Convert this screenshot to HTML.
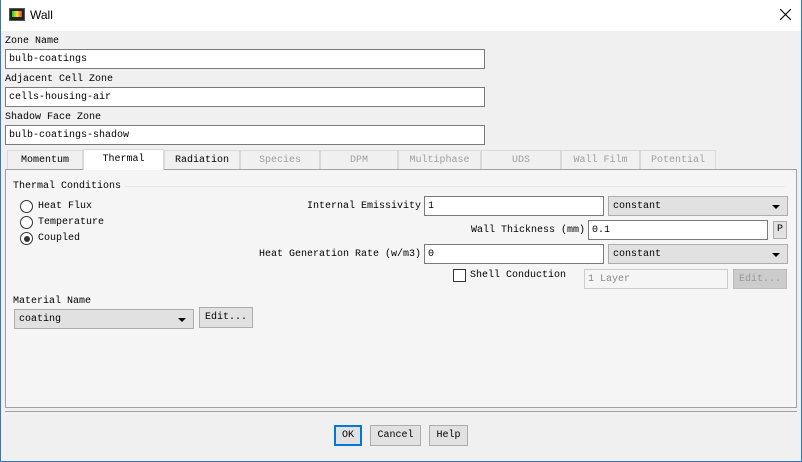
<!DOCTYPE html>
<html><head><style>
*{box-sizing:border-box;margin:0;padding:0}
body{width:802px;height:462px;background:#f0f0f0;position:relative;overflow:hidden;font-family:"Liberation Mono","Noto Sans CJK SC",monospace;font-size:10px;color:#000}
.a{position:absolute;white-space:nowrap}
.in{position:absolute;background:#fff;border:1px solid #7a7a7a;padding:0 0 0 3px;line-height:19px;font-size:10px}
.dd{position:absolute;background:#e1e1e1;border:1px solid #adadad;padding-left:4px;line-height:19px}
.dd:after{content:"";position:absolute;right:7px;top:8px;border-left:4px solid transparent;border-right:4px solid transparent;border-top:4px solid #000}
.btn{position:absolute;background:#e1e1e1;border:1px solid #adadad;text-align:center;line-height:19px}
.tab{position:absolute;top:150px;height:19px;border:1px solid #d9d9d9;border-bottom:none;background:#f0f0f0;text-align:center;line-height:19px;color:#a0a0a0}
</style></head><body>
<div class="a" style="left:0;top:0;width:802px;height:31px;background:#fff"></div>
<div class="a" style="left:0;top:0;width:1px;height:462px;background:#2b79d0"></div>
<div class="a" style="left:801px;top:0;width:1px;height:462px;background:#2b79d0"></div>
<div class="a" style="left:0;top:461px;width:802px;height:1px;background:#2b79d0"></div>
<div class="a" style="left:9px;top:8px;width:16px;height:13px;background:#222;border:1px solid #555"><div style="position:absolute;left:2px;top:2px;width:10px;height:6px;background:linear-gradient(90deg,#1c4,#ee2,#e33)"></div></div>
<div class="a" style="left:30px;top:8px;font-family:'Liberation Sans',sans-serif;font-size:12px">Wall</div>
<svg class="a" style="left:780px;top:9px" width="11" height="11"><path d="M0 0L11 11M11 0L0 11" stroke="#000" stroke-width="1.1"/></svg>

<div class="a" style="left:5px;top:36px">Zone Name</div>
<div class="in" style="left:5px;top:49px;width:480px;height:20px">bulb-coatings</div>
<div class="a" style="left:5px;top:74px">Adjacent Cell Zone</div>
<div class="in" style="left:5px;top:87px;width:480px;height:20px">cells-housing-air</div>
<div class="a" style="left:5px;top:112px">Shadow Face Zone</div>
<div class="in" style="left:5px;top:125px;width:480px;height:20px">bulb-coatings-shadow</div>

<div class="tab" style="left:7px;width:76px;color:#000">Momentum</div>
<div class="tab" style="left:83px;width:81px;top:149px;height:21px;background:#fff;color:#000;z-index:2">Thermal</div>
<div class="tab" style="left:164px;width:76px;color:#000">Radiation</div>
<div class="tab" style="left:240px;width:80px">Species</div>
<div class="tab" style="left:320px;width:78px">DPM</div>
<div class="tab" style="left:398px;width:83px">Multiphase</div>
<div class="tab" style="left:481px;width:80px">UDS</div>
<div class="tab" style="left:561px;width:79px">Wall Film</div>
<div class="tab" style="left:640px;width:76px">Potential</div>

<div class="a" style="left:5px;top:169px;width:792px;height:239px;background:#f5f5f5;border:1px solid #a0a0a0"></div>
<div class="a" style="left:13px;top:181px">Thermal Conditions</div>
<div class="a" style="left:125px;top:186px;width:660px;height:1px;background:#e6e6e6"></div>

<div class="a" style="left:20px;top:200px;width:13px;height:13px;border:1px solid #333;border-radius:50%;background:#fff"></div>
<div class="a" style="left:38px;top:201px">Heat Flux</div>
<div class="a" style="left:20px;top:216px;width:13px;height:13px;border:1px solid #333;border-radius:50%;background:#fff"></div>
<div class="a" style="left:38px;top:217px">Temperature</div>
<div class="a" style="left:20px;top:232px;width:13px;height:13px;border:1px solid #333;border-radius:50%;background:#fff"><div style="position:absolute;left:2.5px;top:2.5px;width:6px;height:6px;border-radius:50%;background:#333"></div></div>
<div class="a" style="left:38px;top:233px">Coupled</div>

<div class="a" style="right:381px;top:201px">Internal Emissivity</div>
<div class="in" style="left:424px;top:196px;width:180px;height:20px">1</div>
<div class="dd" style="left:608px;top:196px;width:180px;height:20px">constant</div>
<div class="a" style="right:217px;top:225px">Wall Thickness (mm)</div>
<div class="in" style="left:588px;top:220px;width:180px;height:20px">0.1</div>
<div class="btn" style="left:773px;top:221px;width:14px;height:18px;line-height:16px">P</div>
<div class="a" style="right:381px;top:249px">Heat Generation Rate (w/m3)</div>
<div class="in" style="left:424px;top:244px;width:180px;height:20px">0</div>
<div class="dd" style="left:608px;top:244px;width:180px;height:20px">constant</div>
<div class="a" style="left:453px;top:269px;width:13px;height:13px;border:1px solid #333;background:#fff"></div>
<div class="a" style="left:470px;top:270px">Shell Conduction</div>
<div class="in" style="left:584px;top:269px;width:144px;height:20px;background:#f5f5f5;border-color:#ccc;color:#888">1 Layer</div>
<div class="btn" style="left:733px;top:269px;width:54px;height:20px;background:#ccc;border-color:#bbb;color:#999">Edit...</div>

<div class="a" style="left:13px;top:296px">Material Name</div>
<div class="dd" style="left:14px;top:309px;width:180px;height:20px">coating</div>
<div class="btn" style="left:199px;top:307px;width:54px;height:21px">Edit...</div>

<div class="a" style="left:5px;top:411px;width:792px;height:1px;background:#a0a0a0"></div>
<div class="btn" style="left:334px;top:425px;width:28px;height:21px;border:2px solid #0078d7;line-height:17px">OK</div>
<div class="btn" style="left:370px;top:425px;width:51px;height:21px">Cancel</div>
<div class="btn" style="left:429px;top:425px;width:39px;height:21px">Help</div>
</body></html>
